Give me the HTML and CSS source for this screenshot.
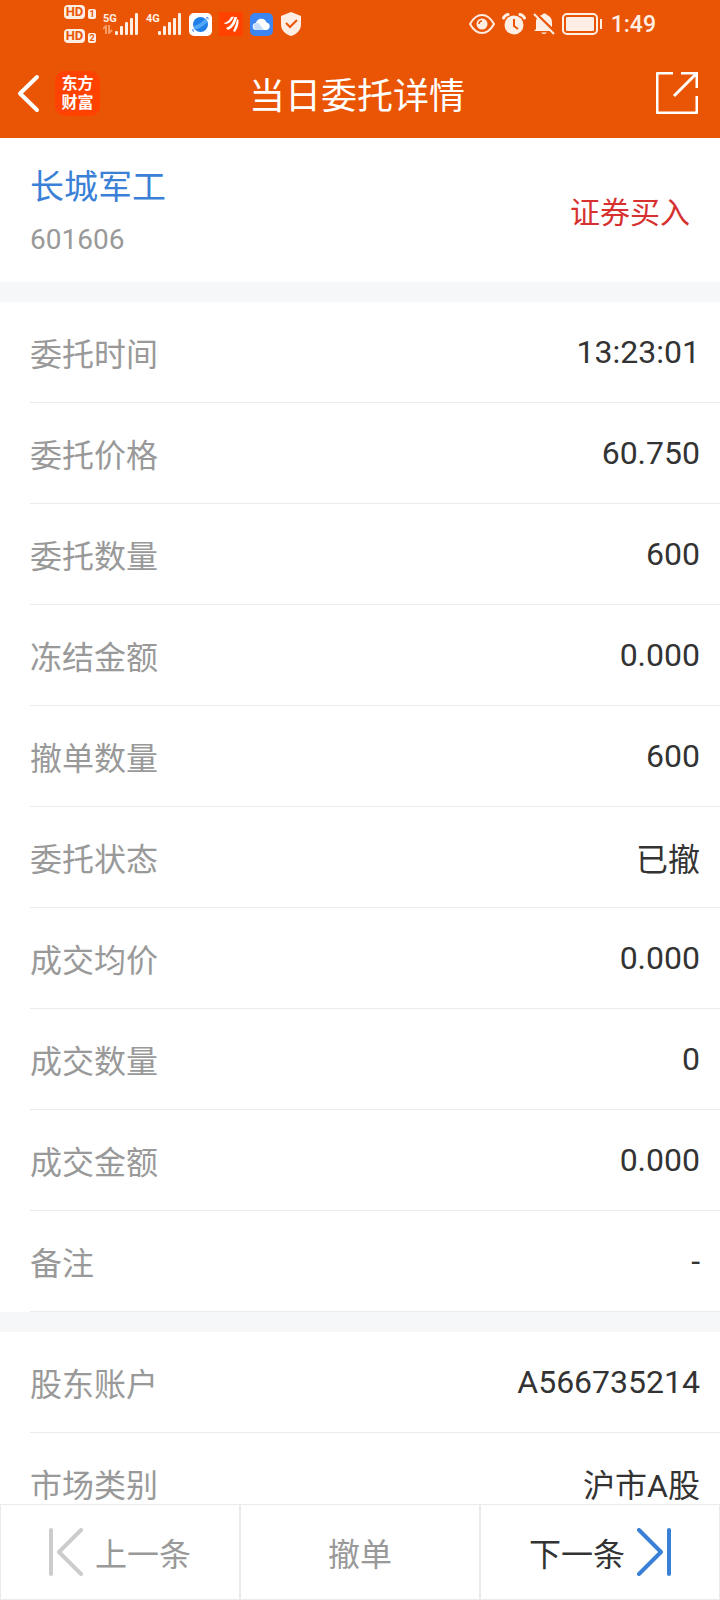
FILE: index.html
```html
<!DOCTYPE html>
<html lang="zh-CN">
<head>
    <meta charset="UTF-8">
    <meta name="viewport" content="width=device-width, initial-scale=1.0">
    <link rel="stylesheet" href="styles.css">
    <title>当日委托详情</title>
</head>
<body>
  <header class="header">
    <div class="statusBar">
      <div class="statusLeft">
        <div class="simList">
          <div class="sim"><span class="hd">HD</span><span class="simNo">1</span></div>
          <div class="sim"><span class="hd">HD</span><span class="simNo">2</span></div>
        </div>
        <div class="signal">
          <div class="network">
            <span>5G</span>
            <svg width="10" height="9" viewBox="0 0 10 9"><path d="M3 9V1L0 4M6 0v8l3-3" fill="none" stroke="#f79a66" stroke-width="2"/></svg>
          </div>
          <svg width="24" height="22" viewBox="0 0 24 22" fill="#ffeee4"><rect x="0" y="18" width="3" height="4" rx="1"/><rect x="5" y="13" width="3" height="9" rx="1"/><rect x="10" y="9" width="3" height="13" rx="1"/><rect x="15" y="5" width="3" height="17" rx="1"/><rect x="20" y="0" width="3" height="22" rx="1"/></svg>
        </div>
        <div class="signal">
          <div class="network"><span>4G</span></div>
          <svg width="24" height="22" viewBox="0 0 24 22" fill="#ffeee4"><rect x="0" y="18" width="3" height="4" rx="1"/><rect x="5" y="13" width="3" height="9" rx="1"/><rect x="10" y="9" width="3" height="13" rx="1"/><rect x="15" y="5" width="3" height="17" rx="1"/><rect x="20" y="0" width="3" height="22" rx="1"/></svg>
        </div>
        <div class="appIcons">
          <!-- browser -->
          <svg width="23" height="23" viewBox="0 0 23 23">
            <rect width="23" height="23" rx="5" fill="#fff"/>
            <circle cx="11.5" cy="11.5" r="7.5" fill="#1f7fe8"/>
            <path d="M4.500 13C8 12.500 14 9 16.500 5.500L18.500 8.500C15 13 9 16.500 5.500 16.500Z" fill="#52a9fa"/>
            <path d="M5 18.500Q3 18.500 4 16M17 5Q19.500 3.500 19 6.500" fill="none" stroke="#2c83e6"/>
          </svg>
          <!-- stock app -->
          <svg width="24" height="24" viewBox="0 0 24 24">
            <rect width="24" height="24" fill="#ff4200"/>
            <path d="M5 11C9 10 11 7 12 5L15 4.500C13 9 10 12 6 12Z" fill="#fff"/>
            <path d="M7 16C12 14 14 10 15.500 5L18 5C17 11 14 16 9 18Z" fill="#fff"/>
            <path d="M14 19C16 15 17.500 11 18 7L19.500 8C20 13 18 17 16 20Z" fill="#fff"/>
          </svg>
          <!-- cloud -->
          <svg width="23" height="23" viewBox="0 0 23 23">
            <rect width="23" height="23" rx="5" fill="#3b86f2"/>
            <path d="M6.500 17a3.500 3.500 0 0 1-.5-7 5.500 5.500 0 0 1 10.500-.5A3.800 3.800 0 0 1 16.500 17Z" fill="#fff"/>
            <path d="M4 15a3.500 3.500 0 0 1 5-4.500L14 17H6.500Q5 17 4 15Z" fill="#c3dcfc"/>
          </svg>
          <!-- shield -->
          <svg width="22" height="24" viewBox="0 0 22 24">
            <path d="M11 0L21 4V12C21 18 17 22 11 24C5 22 1 18 1 12V4Z" fill="#ffeee4"/>
            <path d="M6 11l4 4 7-7" fill="none" stroke="#e95504" stroke-width="2"/>
          </svg>
        </div>
      </div>
      <div class="statusRight">
        <!-- eye -->
        <svg width="26" height="22" viewBox="0 0 26 22">
          <path d="M1 11Q6 2 13 2T25 11Q20 20 13 20T1 11Z" fill="none" stroke="#ffeee4" stroke-width="2"/>
          <circle cx="13" cy="11" r="5.500" fill="#ffeee4"/>
          <path d="M10 11a3 3 0 0 1 3-3" fill="none" stroke="#e95504" stroke-width="1.500"/>
        </svg>
        <!-- alarm -->
        <svg width="24" height="22" viewBox="0 0 24 22">
          <circle cx="12" cy="12" r="9.500" fill="#ffeee4"/>
          <path d="M1.500 5Q3 2 6 1.500M22.500 5Q21 2 18 1.500" fill="none" stroke="#ffeee4" stroke-width="3" stroke-linecap="round"/>
          <path d="M12 6v7l4 3" fill="none" stroke="#e95504" stroke-width="2"/>
        </svg>
        <!-- muted bell -->
        <svg width="22" height="22" viewBox="0 0 22 22">
          <path d="M3 16V9C3 5 6 2.500 9 2C10 0 13 0 14 2C17 3 19 6 19 9V16L21 18H1Z" fill="#ffeee4"/>
          <path d="M8 19.500h6q-3 3-6 0" fill="#ffeee4"/>
          <path d="M2 0L22 19" stroke="#e95504" stroke-width="3"/>
          <path d="M1 1L21 21" stroke="#ffeee4" stroke-width="2"/>
        </svg>
        <!-- battery -->
        <svg width="42" height="22" viewBox="0 0 42 22">
          <rect x="1" y="1" width="34" height="20" rx="4" fill="none" stroke="#ffeee4" stroke-width="2"/>
          <rect x="4" y="4" width="28" height="14" rx="1" fill="#ffeee4"/>
          <path d="M39 6v10" stroke="#ffeee4" stroke-width="2"/>
        </svg>
        <span class="clock">1:49</span>
      </div>
    </div>
    <div class="navBar">
      <div class="navLeft">
        <button class="iconBtn" aria-label="返回">
          <svg width="24" height="40" viewBox="0 0 24 40"><path d="M21 4L4 20.500L21 37" fill="none" stroke="#fff" stroke-width="4" stroke-linecap="round" stroke-linejoin="round"/></svg>
        </button>
        <a class="logo" href="#">东方<br>财富</a>
      </div>
      <h1 class="title">当日委托详情</h1>
      <button class="iconBtn" aria-label="分享">
        <svg width="42" height="42" viewBox="0 0 42 42"><path d="M17 1H3Q1 1 1 3V39Q1 41 3 41H39Q41 41 41 39V24M25 1H41V16M41 1L18 24" fill="none" stroke="#fff" stroke-width="3"/></svg>
      </button>
    </div>
  </header>

  <main class="content">
    <section class="stock">
      <div>
        <a class="stockName" href="#">长城军工</a>
        <div class="stockCode">601606</div>
      </div>
      <div class="direction">证券买入</div>
    </section>

    <dl class="list">
      <div class="row"><dt>委托时间</dt><dd>13:23:01</dd></div>
      <div class="row"><dt>委托价格</dt><dd>60.750</dd></div>
      <div class="row"><dt>委托数量</dt><dd>600</dd></div>
      <div class="row"><dt>冻结金额</dt><dd>0.000</dd></div>
      <div class="row"><dt>撤单数量</dt><dd>600</dd></div>
      <div class="row"><dt>委托状态</dt><dd>已撤</dd></div>
      <div class="row"><dt>成交均价</dt><dd>0.000</dd></div>
      <div class="row"><dt>成交数量</dt><dd>0</dd></div>
      <div class="row"><dt>成交金额</dt><dd>0.000</dd></div>
      <div class="row"><dt>备注</dt><dd>-</dd></div>
    </dl>

    <dl class="list">
      <div class="row"><dt>股东账户</dt><dd>A566735214</dd></div>
      <div class="row"><dt>市场类别</dt><dd>沪市A股</dd></div>
    </dl>
  </main>

  <footer class="footer">
    <button class="footBtn">
      <svg width="34" height="48" viewBox="0 0 34 48"><path d="M2 2V46M32 2L10 24L32 46" fill="none" stroke="#ccc" stroke-width="4" stroke-linecap="round" stroke-linejoin="round"/></svg>
      上一条
    </button>
    <button class="footBtn">撤单</button>
    <button class="footBtn next">
      下一条
      <svg width="34" height="48" viewBox="0 0 34 48"><path d="M32 2V46M2 2L24 24L2 46" fill="none" stroke="#3a80d6" stroke-width="4" stroke-linecap="round" stroke-linejoin="round"/></svg>
    </button>
  </footer>
</body>
</html>
```
FILE: styles.css
```css
* {
  box-sizing: border-box;
}

body {
  margin: 0;
  height: 100vh;
  display: flex;
  flex-direction: column;
  font-family: Roboto, "Noto Sans CJK SC", sans-serif;
  font-size: 32px;
  color: #333;
  background-color: #f6f7f9;
}

svg {
  display: block;
  flex: none;
}

button {
  font: inherit;
  color: inherit;
  background: none;
  border: 0;
  padding: 0;
  cursor: pointer;
}

a {
  text-decoration: none;
}

.header {
  background-color: #e95504;
  color: #fff;
}

/* status bar */
.statusBar {
  display: flex;
  justify-content: space-between;
  height: 48px;
  padding: 0 64px;
  color: #ffeee4;
}

.statusLeft, .statusRight, .appIcons, .sim {
  display: flex;
  align-items: center;
}

.statusLeft, .statusRight, .appIcons {
  gap: 7px;
}

.simList {
  display: flex;
  flex-direction: column;
  gap: 10px;
}

.sim {
  gap: 3px;
  align-items: flex-end;
  color: #e95504;
  font-weight: bold;
}

.hd {
  width: 21px;
  height: 14px;
  border-radius: 4px;
  background-color: #ffeee4;
  font-size: 13px;
  line-height: 14px;
  text-align: center;
}

.simNo {
  width: 8px;
  height: 10px;
  border-radius: 2px;
  background-color: #ffeee4;
  font-size: 9px;
  line-height: 10px;
  text-align: center;
}

.signal {
  display: flex;
}

.network {
  width: 12px;
  font-size: 11px;
  line-height: 12px;
  font-weight: bold;
}

.network span {
  display: block;
}

.clock {
  font-size: 23px;
  font-weight: 500;
}

/* title bar */
.navBar {
  display: grid;
  grid-template-columns: 1fr auto 1fr;
  align-items: center;
  height: 90px;
  padding: 0 22px 0 16px;
}

.navBar > .iconBtn {
  justify-self: end;
}

.navLeft {
  display: flex;
  align-items: center;
  gap: 15px;
}

.logo {
  width: 45px;
  height: 45px;
  padding: 3px 0;
  border-radius: 10px;
  background-color: #ff4200;
  color: #fff;
  font-size: 16px;
  line-height: 19px;
  font-weight: bold;
  text-align: center;
}

.title {
  margin: 0;
  font-size: 36px;
  font-weight: normal;
}

/* order detail */
.content {
  flex: 1;
  min-height: 0;
  overflow-y: auto;
  scrollbar-width: none;
}

.stock {
  display: flex;
  justify-content: space-between;
  align-items: center;
  height: 144px;
  padding: 0 30px;
  background-color: #fff;
}

.stockName {
  display: block;
  padding-top: 4px;
  color: #3a80d6;
  font-size: 34px;
  line-height: 56px;
}

.stockCode {
  color: #999;
  font-size: 28px;
  line-height: 50px;
}

.direction {
  color: #d6302f;
  font-size: 30px;
}

.list {
  margin: 20px 0 0;
  padding-left: 30px;
  background-color: #fff;
}

.row {
  display: flex;
  justify-content: space-between;
  align-items: center;
  height: 101px;
  padding-right: 20px;
  border-bottom: 1px solid #ebebeb;
}

.row dt {
  color: #999;
}

.row dd {
  margin: 0;
}

/* bottom buttons */
.footer {
  display: flex;
  height: 96px;
  background-color: #fff;
}

.footBtn {
  flex: 1;
  display: flex;
  justify-content: center;
  align-items: center;
  gap: 12px;
  border: 1px solid #ebebeb;
  color: #999;
}

.next {
  color: #333;
}
```
